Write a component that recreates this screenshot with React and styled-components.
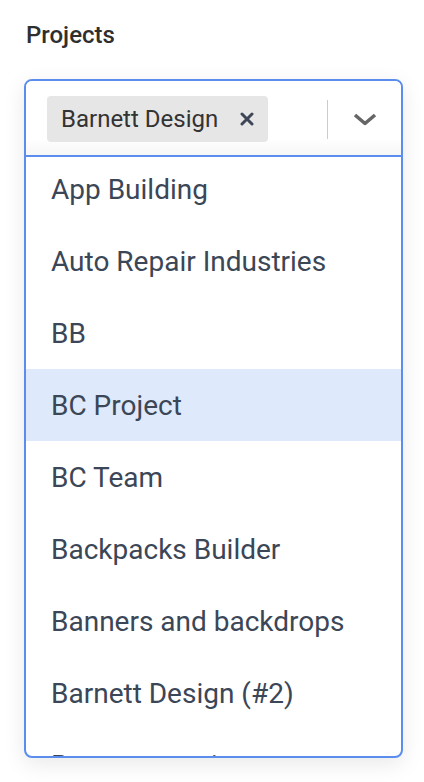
import React from "react";
import styled, { createGlobalStyle } from "styled-components";

const GlobalStyle = createGlobalStyle`
    html, body {
        margin: 0;
        padding: 0;
        background: #ffffff;
        font-family: Roboto, "Liberation Sans", sans-serif;
    }
`;

const Page = styled.div`
    padding: 18px 21px 0 24px;
    height: 782px;
    box-sizing: border-box;
    overflow: hidden;
`;

const Label = styled.div`
    padding-left: 2px;
    font-size: 24px;
    font-weight: 500;
    line-height: 34px;
    color: #2f2f2f;
    margin-bottom: 27px;
`;

const Select = styled.div`
    height: 679px;
    box-sizing: border-box;
    border: 2px solid #5b8def;
    border-radius: 8px;
    background: #fff;
    box-shadow: 0 6px 22px rgba(0, 0, 0, 0.09);
    overflow: hidden;
    display: flex;
    flex-direction: column;
`;

const Control = styled.div`
    height: 74px;
    flex: none;
    display: flex;
    align-items: center;
    padding-left: 21px;
    border-bottom: 2px solid #5b8def;
    background: linear-gradient(to bottom, #fff 78%, #f6f6f6 100%);
`;

const Values = styled.div`
    flex: 1;
    display: flex;
    align-items: center;
`;

const Chip = styled.div`
    display: flex;
    align-items: center;
    height: 46px;
    margin-top: 2px;
    padding: 0 13px 0 14px;
    border-radius: 4px;
    background: #e6e6e6;
    color: #333;
    font-size: 24px;
`;

const Remove = styled.span`
    display: flex;
    align-items: center;
    justify-content: center;
    width: 16px;
    margin-left: 21px;
`;

const Separator = styled.span`
    width: 1.5px;
    height: 39px;
    margin-top: 2px;
    background: #cccccc;
`;

const Indicator = styled.div`
    width: 73px;
    display: flex;
    align-items: center;
    justify-content: center;
    margin-top: 2px;
`;

const Menu = styled.div`
    flex: 1;
    overflow: hidden;
`;

const List = styled.ul`
    list-style: none;
    margin: -4px 0 0;
    padding: 0;
`;

const Option = styled.li`
    height: 72px;
    display: flex;
    align-items: center;
    padding-left: 25px;
    font-size: 28px;
    color: #3b4656;
    background: ${(props) => (props.$focused ? "#deeafb" : "transparent")};
`;

const options = [
    "App Building",
    "Auto Repair Industries",
    "BB",
    "BC Project",
    "BC Team",
    "Backpacks Builder",
    "Banners and backdrops",
    "Barnett Design (#2)",
    "Barcamp projects",
];

const App = () => {
    return (
        <>
            <GlobalStyle />
            <Page>
                <Label>Projects</Label>
                <Select>
                    <Control>
                        <Values>
                            <Chip>
                                Barnett Design
                                <Remove>
                                    <svg width="14" height="14" viewBox="0 0 14 14">
                                        <path
                                            d="M2 2 L12 12 M12 2 L2 12"
                                            stroke="#3d4758"
                                            strokeWidth="3"
                                            strokeLinecap="round"
                                        />
                                    </svg>
                                </Remove>
                            </Chip>
                        </Values>
                        <Separator />
                        <Indicator>
                            <svg width="26" height="16" viewBox="0 0 26 16">
                                <path
                                    d="M3 4 L13 12.5 L23 4"
                                    fill="none"
                                    stroke="#666"
                                    strokeWidth="3.6"
                                    strokeLinejoin="round"
                                />
                            </svg>
                        </Indicator>
                    </Control>
                    <Menu>
                        <List>
                            {options.map((name) => (
                                <Option key={name} $focused={name === "BC Project"}>
                                    {name}
                                </Option>
                            ))}
                        </List>
                    </Menu>
                </Select>
            </Page>
        </>
    );
};

export default App;
